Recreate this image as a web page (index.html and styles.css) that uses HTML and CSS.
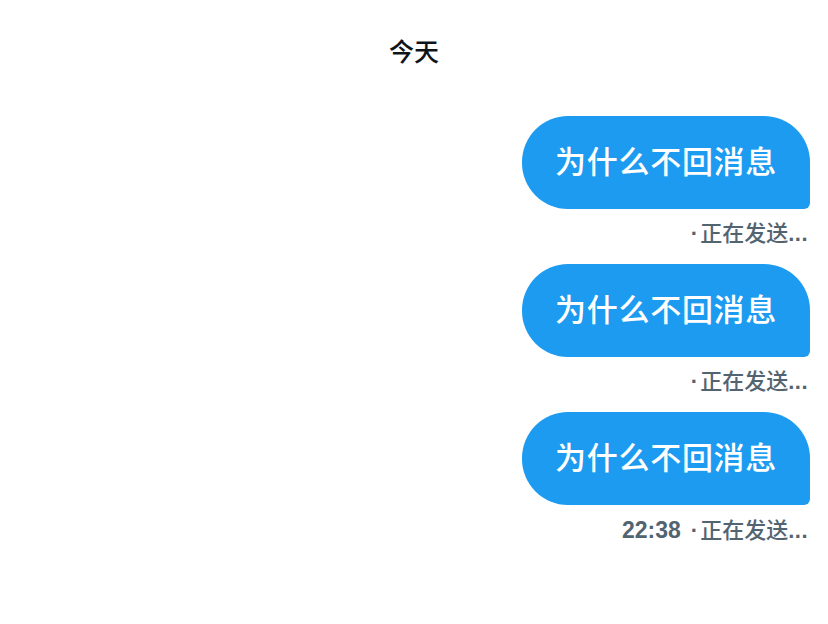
FILE: index.html
```html
<!DOCTYPE html>
<html lang="zh-CN">
<head>
<meta charset="utf-8">
<title>消息</title>
<link rel="stylesheet" href="styles.css">
</head>
<body>
<div class="day">今天</div>
<div class="thread">
  <div class="msg">
    <div class="bubble">为什么不回消息</div>
    <div class="meta"><span class="dot">·</span>正在发送<span class="ell">...</span></div>
  </div>
  <div class="msg">
    <div class="bubble">为什么不回消息</div>
    <div class="meta"><span class="dot">·</span>正在发送<span class="ell">...</span></div>
  </div>
  <div class="msg">
    <div class="bubble">为什么不回消息</div>
    <div class="meta"><span class="time">22:38</span><span class="dot">·</span>正在发送<span class="ell">...</span></div>
  </div>
</div>
</body>
</html>
```
FILE: styles.css
```css
html, body {
  margin: 0;
  padding: 0;
  background: #ffffff;
}
body {
  font-family: "Liberation Sans", "Noto Sans CJK SC", sans-serif;
  width: 828px;
  height: 624px;
}
.day {
  text-align: center;
  padding-top: 36px;
  font-size: 25px;
  line-height: 32px;
  color: #0f1419;
  font-weight: 500;
}
.thread {
  display: flex;
  flex-direction: column;
  align-items: flex-end;
  padding-right: 18px;
  margin-top: 48px;
  gap: 18px;
}
.msg {
  display: flex;
  flex-direction: column;
  align-items: flex-end;
}
.bubble {
  background: #1d9bf0;
  color: #ffffff;
  font-size: 31px;
  font-weight: 500;
  line-height: 45px;
  padding: 24px 33px;
  border-radius: 46px 46px 6px 46px;
  letter-spacing: 0.7px;
}
.meta {
  margin-top: 13px;
  font-size: 22px;
  line-height: 24px;
  color: #536471;
  font-weight: 500;
  padding-right: 2px;
}
.dot {
  font-weight: 700;
  margin: 0 2px 0 10px;
}
.ell {
  font-weight: 700;
  letter-spacing: 0.5px;
}
.time {
  font-weight: 700;
  font-size: 23px;
}
```
